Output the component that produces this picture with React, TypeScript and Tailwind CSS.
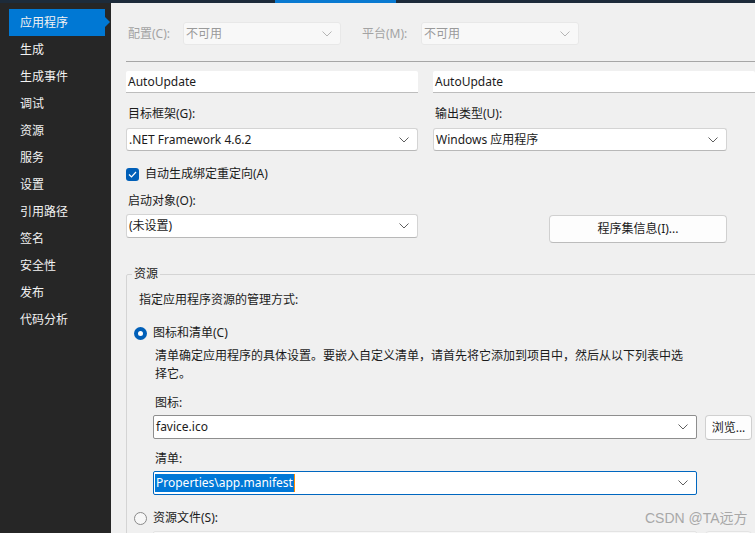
import React from "react";

const Chevron = ({ color = "#5f5f5f" }: { color?: string }) => (
  <svg width="10" height="6" viewBox="0 0 10 6" className="shrink-0">
    <path d="M0.5 0.5 L5 5 L9.5 0.5" fill="none" stroke={color} strokeWidth="1" />
  </svg>
);

const navItems = [
  "应用程序",
  "生成",
  "生成事件",
  "调试",
  "资源",
  "服务",
  "设置",
  "引用路径",
  "签名",
  "安全性",
  "发布",
  "代码分析",
];

function Select({ value, className = "" }: { value: string; className?: string }) {
  return (
    <div
      className={`h-[23px] bg-white border border-[#d4d4d4] border-b-[#b8b8b8] rounded-[3px] flex items-center justify-between pl-[2px] pr-[8px] ${className}`}
    >
      <span className="text-[#1b1b1b]">{value}</span>
      <Chevron />
    </div>
  );
}

export default function App() {
  return (
    <div className="w-[755px] h-[533px] overflow-hidden flex flex-col text-[12px] leading-[16px] font-['Noto_Sans','Noto_Sans_CJK_SC',sans-serif] bg-[#f0f0f0]">
      {/* top bar */}
      <div className="h-[3px] flex shrink-0">
        <div className="w-[275px] bg-[#1d2b3a]" />
        <div className="w-[121px] bg-[#0a7ad1]" />
        <div className="flex-1 bg-[#1d2b3a]" />
      </div>
      <div className="flex flex-1 min-h-0">
        {/* sidebar */}
        <div className="w-[111px] shrink-0 bg-[#262626] pt-[6px]">
          {navItems.map((item, i) => (
            <div key={item} className="relative h-[27px] pl-[9px] pr-[6px]">
              <div
                className={`h-[27px] leading-[27px] pl-[11px] text-[#f2f2f2] ${i === 0 ? "bg-[#0078d4]" : ""}`}
              >
                {item}
              </div>
              {i === 0 && (
                <div className="absolute right-[1px] top-[8px] w-0 h-0 border-y-[5px] border-y-transparent border-l-[5px] border-l-[#0078d4]" />
              )}
            </div>
          ))}
        </div>

        {/* content */}
        <div className="relative flex-1 min-w-0 pl-[15px] pt-[19px] overflow-hidden">
          {/* config row */}
          <div className="flex items-center h-[23px]">
            <div className="w-[57px] pl-[2px] text-[#a3a3a3]">配置(C):</div>
            <div className="w-[158px] h-[23px] bg-[#f8f8f8] border border-[#e8e8e8] rounded-[3px] flex items-center justify-between pl-[2px] pr-[8px]">
              <span className="text-[#9a9a9a]">不可用</span>
              <Chevron color="#b5b5b5" />
            </div>
            <div className="w-[59px] ml-[21px] text-[#a3a3a3]">平台(M):</div>
            <div className="w-[158px] h-[23px] bg-[#f8f8f8] border border-[#e8e8e8] rounded-[3px] flex items-center justify-between pl-[2px] pr-[8px]">
              <span className="text-[#9a9a9a]">不可用</span>
              <Chevron color="#b5b5b5" />
            </div>
          </div>

          <div className="mt-[16px] h-px bg-[#a6a6a6]" />

          {/* name inputs */}
          <div className="mt-[9px] grid grid-cols-[292px_1fr] gap-x-[15px]">
            <div className="h-[22px] bg-white border-b border-b-[#bdbdbd] rounded-t-[2px] flex items-center pl-[2px] text-[#1b1b1b]">
              AutoUpdate
            </div>
            <div className="h-[22px] bg-white border-b border-b-[#bdbdbd] rounded-t-[2px] flex items-center pl-[2px] text-[#1b1b1b]">
              AutoUpdate
            </div>

            <div className="pt-[13px] pb-[6px] pl-[2px] text-[#1b1b1b]">目标框架(G):</div>
            <div className="pt-[13px] pb-[6px] pl-[2px] text-[#1b1b1b]">输出类型(U):</div>

            <Select value=".NET Framework 4.6.2" />
            <Select value="Windows 应用程序" className="w-[294px]" />
          </div>

          {/* checkbox */}
          <div className="mt-[16px] h-[14px] flex items-center">
            <div className="w-[13px] h-[13px] rounded-[3px] bg-[#005fb8] flex items-center justify-center">
              <svg width="9" height="7" viewBox="0 0 9 7">
                <path d="M1 3.5 L3.5 6 L8 1" fill="none" stroke="white" strokeWidth="1.2" />
              </svg>
            </div>
            <span className="ml-[6px] text-[#1b1b1b]">自动生成绑定重定向(A)</span>
          </div>

          <div className="pt-[12px] pb-[5px] pl-[2px] text-[#1b1b1b]">启动对象(O):</div>

          <div className="grid grid-cols-[292px_1fr] gap-x-[15px] items-start">
            <Select value="(未设置)" className="h-[24px]" />
            <div className="w-[294px] flex justify-end">
              <div className="mt-[1px] w-[178px] h-[28px] bg-[#fdfdfd] border border-[#d0d0d0] border-b-[#bcbcbc] rounded-[4px] flex items-center justify-center text-[#1b1b1b]">
                程序集信息(I)...
              </div>
            </div>
          </div>

          {/* resources group */}
          <fieldset className="mt-[23px] w-[700px] border border-[#d4d4d4] rounded-[2px] pl-[7px] pb-[20px]">
            <legend className="-ml-[2px] px-[2px] text-[#1b1b1b]">资源</legend>
            <div className="mt-[10px] pl-[5px] text-[#1b1b1b]">指定应用程序资源的管理方式:</div>

            <div className="mt-[17px] h-[16px] flex items-center">
              <div className="w-[13px] h-[13px] rounded-full bg-[#005fb8] flex items-center justify-center">
                <div className="w-[5px] h-[5px] rounded-full bg-white" />
              </div>
              <span className="ml-[6px] text-[#1b1b1b]">图标和清单(C)</span>
            </div>

            <div className="pl-[19px]">
              <p className="mt-[6px] w-[540px] leading-[18px] pl-[2px] text-[#1b1b1b]">
                清单确定应用程序的具体设置。要嵌入自定义清单，请首先将它添加到项目中，然后从以下列表中选择它。
              </p>
              <div className="mt-[12px] pl-[2px] text-[#1b1b1b]">图标:</div>
              <div className="mt-[4px] flex items-start">
                <div className="w-[544px] h-[24px] bg-white border border-[#8e8e8e] rounded-[2px] flex items-center justify-between pl-[2px] pr-[8px]">
                  <span className="text-[#1b1b1b]">favice.ico</span>
                  <Chevron />
                </div>
                <div className="ml-[8px] w-[47px] h-[25px] bg-[#fdfdfd] border border-[#d0d0d0] border-b-[#bcbcbc] rounded-[4px] flex items-center justify-center text-[#1b1b1b]">
                  浏览...
                </div>
              </div>
              <div className="mt-[11px] pl-[2px] text-[#1b1b1b]">清单:</div>
              <div className="mt-[4px] w-[544px] h-[24px] bg-white border border-[#0067c0] rounded-[2px] flex items-center justify-between pl-[1px] pr-[8px]">
                <span className="bg-[#0078d7] text-white leading-[18px] px-[1px] border-r border-r-[#ff8a00]">
                  Properties\app.manifest
                </span>
                <Chevron />
              </div>
            </div>

            <div className="mt-[15px] h-[16px] flex items-center">
              <div className="w-[13px] h-[13px] rounded-full border border-[#8a8a8a] bg-[#f7f7f7]" />
              <span className="ml-[6px] text-[#1b1b1b]">资源文件(S):</span>
            </div>
            <div className="pl-[19px] mt-[5px] flex items-start">
              <div className="w-[544px] h-[24px] bg-[#f8f8f8] border border-[#e3e3e3] rounded-[2px]" />
              <div className="ml-[8px] w-[47px] h-[25px] bg-[#f8f8f8] border border-[#e3e3e3] rounded-[4px]" />
            </div>
          </fieldset>

          <div className="absolute left-[534px] top-[505px] text-[14px] leading-[20px] text-[#a8a8a8] font-['Liberation_Sans','Noto_Sans_CJK_SC',sans-serif]">
            CSDN @TA远方
          </div>
        </div>
      </div>
    </div>
  );
}
